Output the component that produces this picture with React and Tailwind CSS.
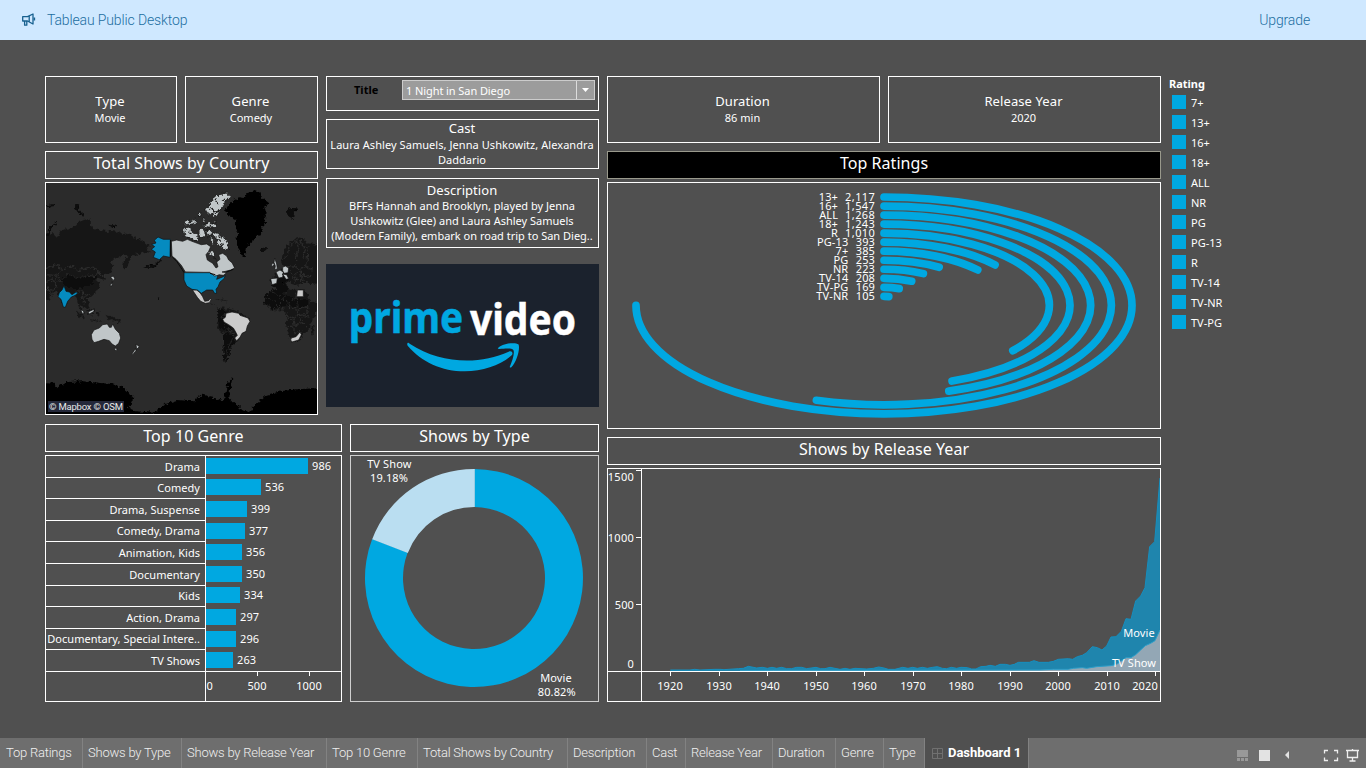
import React from "react";

const BLUE = "#00a8e1";

const genres = [
  { name: "Drama", value: 986, row: "h-[22px]", bar: "mt-[2px]" },
  { name: "Comedy", value: 536, row: "h-[21px]", bar: "mt-px" },
  { name: "Drama, Suspense", value: 399, row: "h-[22px]", bar: "mt-[2px]" },
  { name: "Comedy, Drama", value: 377, row: "h-[21px]", bar: "mt-[2px]" },
  { name: "Animation, Kids", value: 356, row: "h-[22px]", bar: "mt-[2px]" },
  { name: "Documentary", value: 350, row: "h-[22px]", bar: "mt-[2px]" },
  { name: "Kids", value: 334, row: "h-[21px]", bar: "mt-px" },
  { name: "Action, Drama", value: 297, row: "h-[22px]", bar: "mt-[2px]" },
  { name: "Documentary, Special Intere..", value: 296, row: "h-[21px]", bar: "mt-[2px]" },
  { name: "TV Shows", value: 263, row: "h-[22px]", bar: "mt-[2px]" },
];

const ratings = [
  ["13+", 2117],
  ["16+", 1547],
  ["ALL", 1268],
  ["18+", 1243],
  ["R", 1010],
  ["PG-13", 393],
  ["7+", 385],
  ["PG", 253],
  ["NR", 223],
  ["TV-14", 208],
  ["TV-PG", 169],
  ["TV-NR", 105],
];

const legend = ["7+", "13+", "16+", "18+", "ALL", "NR", "PG", "PG-13", "R", "TV-14", "TV-NR", "TV-PG"];

const tabs = [
  ["Top Ratings", "w-[83px] pl-[6px]"],
  ["Shows by Type", "w-[99px] pl-[5px]"],
  ["Shows by Release Year", "w-[145px] pl-[5px]"],
  ["Top 10 Genre", "w-[91px] pl-[5px]"],
  ["Total Shows by Country", "w-[150px] pl-[5px]"],
  ["Description", "w-[79px] pl-[5px]"],
  ["Cast", "w-[39px] pl-[5px]"],
  ["Release Year", "w-[87px] pl-[5px]"],
  ["Duration", "w-[63px] pl-[5px]"],
  ["Genre", "w-[48px] pl-[5px]"],
  ["Type", "w-[41px] pl-[5px]"],
];

function Card({ title, value, width, nudge = "" }) {
  return (
    <div className={`${width} flex h-[67px] flex-col items-center border border-white pt-[15px] pr-[2px]`}>
      <div className="text-[13px] leading-[18px] tracking-[0.1px]">{title}</div>
      <div className={`text-[11px] leading-[15px] ${nudge}`}>{value}</div>
    </div>
  );
}

function Heading({ children, className = "border-white leading-[23px]" }) {
  return (
    <div className={`flex h-[28px] justify-center border text-[16px] tracking-[0.05px] ${className}`}>{children}</div>
  );
}

function WorldMap() {
  const gray = "#c0c6c8";
  return (
    <svg className="block h-full w-full" viewBox="18 15 813 693" preserveAspectRatio="none">
      <defs>
        <filter id="coast" filterUnits="userSpaceOnUse" x="0" y="0" width="850" height="730">
          <feTurbulence type="fractalNoise" baseFrequency="0.09" numOctaves="3" seed="4" result="noise" />
          <feDisplacementMap in="SourceGraphic" in2="noise" scale="17" xChannelSelector="R" yChannelSelector="G" />
        </filter>
      </defs>
      <rect x="18" y="15" width="813" height="693" fill="#2b2b2b" />
      <g filter="url(#coast)">
        <g fill="#191919">
          <path d="M10 172 L40 168 52 180 62 160 80 152 100 146 118 132 132 122 152 130 156 152 175 156 200 158 220 160 240 166 262 168 290 180 315 192 326 205 320 212 332 226 318 222 300 226 286 224 296 234 276 232 270 246 264 262 252 272 246 256 262 236 252 228 240 238 220 240 214 252 220 262 216 276 206 286 196 290 188 292 196 304 192 312 184 304 176 300 170 306 180 316 176 330 166 344 154 356 140 360 148 374 150 388 140 396 130 386 122 380 124 398 132 410 126 408 116 386 112 368 104 352 90 348 86 362 74 386 64 372 56 352 44 340 36 350 26 368 10 360 Z" />
          <path d="M106 396 L116 402 134 420 130 424 114 410 Z M140 402 L152 392 164 396 158 408 144 410 Z M168 402 l8 -4 4 10 -8 6 Z M196 412 l20 2 22 12 4 8 -16 -4 -20 -6 Z M150 424 l30 4 -2 3 -28 -4 Z" />
          <path d="M546 388 L572 392 600 404 628 420 620 446 606 466 594 486 578 500 570 520 558 556 548 546 550 510 554 480 540 458 530 438 538 410 Z" />
          <path d="M508 374 L524 382 532 392 546 394 544 390 528 388 520 378 Z M528 362 l28 4 8 4 -30 -4 Z" />
          <path d="M726 236 L734 212 752 192 770 180 790 184 800 196 840 200 840 316 812 318 796 316 780 320 760 320 748 310 734 318 700 318 690 312 694 300 710 298 706 284 724 276 732 266 726 252 Z" />
          <path d="M676 362 L690 338 718 330 740 332 760 336 790 334 800 344 812 368 840 380 831 402 816 428 808 452 790 470 776 492 756 492 746 468 738 440 742 416 734 402 710 398 690 396 674 380 Z M812 452 l12 -12 -2 22 -8 8 Z" />
        </g>
        <g fill="#080808">
          <path d="M62 304 L86 290 118 298 142 294 172 298 162 312 148 328 128 328 110 336 84 326 68 318 Z" />
          <path d="M676 352 L700 334 736 336 740 352 768 362 802 362 808 380 780 388 744 380 700 392 674 380 Z M710 300 l20 -8 16 10 -10 10 -30 8 Z" />
          <path d="M552 470 L580 472 586 492 572 508 560 552 548 540 Z M530 396 l28 0 -4 24 18 30 -10 24 -24 -34 Z M690 318 l40 -4 20 18 -30 6 Z" />
          <path d="M106 78 l6 2 2 12 18 16 -2 8 -12 -8 -12 -16 Z M20 176 Q24 142 52 130 L50 136 Q30 148 28 176 Z M208 140 l24 4 -6 4 -18 -4 Z M20 82 l24 -4 -2 6 -22 2 Z" />
          <path d="M738 98 l14 -8 20 2 -8 10 -6 20 -12 -4 Z M660 212 l16 -6 8 6 -10 10 -14 0 Z M306 270 L346 258 360 244 362 248 348 266 310 273 Z M350 358 l10 6 -4 2 Z" />
        </g>
        <g fill="#000">
          <path d="M564 84 L580 66 600 58 614 60 622 42 644 36 658 42 660 54 684 72 676 86 680 102 674 114 678 134 666 146 668 160 656 176 634 192 618 208 614 236 604 230 596 210 590 180 592 158 584 144 586 126 574 114 560 110 552 98 Z" />
          <path d="M8 612 L40 614 54 628 78 612 130 610 176 614 214 618 244 626 268 644 280 660 266 690 288 700 340 704 374 678 410 666 460 670 486 650 516 656 546 668 556 646 562 618 578 598 570 632 568 660 584 676 610 698 628 702 650 674 680 650 720 640 770 634 842 630 842 725 8 725 Z" />
        </g>
        <g fill="none" stroke="#393939" strokeWidth="1.8" strokeLinejoin="round">
          <path d="M18 272 l28 -12 20 14 26 -10 22 14 34 -10 24 6 10 18 14 6 M64 276 l-14 18 14 14 20 -18 34 10 28 -8 20 4 14 -16 M18 290 l28 2 6 16 20 2 M18 314 l16 -8 14 8 -6 22 -24 -2 M110 344 l16 -10 6 14 -8 10 12 10 -4 8 M122 362 l18 -8 M150 352 l-18 -6 M18 332 l16 12 -4 16" />
          <path d="M728 246 l14 -14 4 -24 24 -22 8 22 -10 18 2 20 M778 186 l18 26 -6 30 M740 266 l24 -4 14 12 22 -6 18 8 M748 276 l12 14 22 -10 10 16 22 -4 M768 296 l-4 18 M782 280 l4 24 18 8 M804 206 l-4 62 M756 302 l24 4 10 10" />
          <path d="M676 360 l20 4 18 20 20 -20 2 -28 M694 340 l26 16 M720 358 l24 18 24 -16 2 -24 M744 378 l6 14 20 -4 4 -28 M774 388 l24 2 12 -20 M770 392 l6 18 -14 10 -18 -8 M776 410 l24 -4 4 -20 M742 424 l20 2 4 18 -26 2 M768 440 l20 -6 14 14 M760 448 l6 20 20 -12 M782 418 l-2 18 M784 412 l24 6 M688 382 l2 14 M704 384 l0 14 M718 386 l-2 12 M732 388 l-4 10" />
          <path d="M554 394 l2 16 -16 8 M544 420 l14 10 -8 20 M558 452 l16 6 8 18 -14 20 -12 50 M568 462 l-16 -4 -2 48 -2 36 M568 396 l4 10 M582 400 l0 10 M594 404 l-2 8" />
        </g>
        <g fill={gray} stroke="#101010" strokeWidth="2" strokeLinejoin="round">
          <path d="M430 154 l12 -6 10 8 12 10 12 12 -4 8 -14 0 -10 -8 -12 -2 Z M480 160 l8 -6 8 8 -4 14 -10 2 -6 -8 Z M498 156 l16 2 0 12 -12 4 Z M520 162 l14 4 12 8 8 4 10 24 0 16 -10 -4 -12 -10 -10 -2 -6 -8 10 -8 -8 -8 -12 -4 Z M490 140 l18 -6 20 2 -2 12 -16 2 -18 -4 Z M498 94 l12 -14 6 -14 14 -12 14 -8 20 0 6 10 -8 10 -10 10 -10 18 -6 8 -4 12 -12 2 -4 -12 -10 8 -6 -8 Z M474 106 l10 0 -2 8 -8 0 Z M434 130 l16 -6 -4 8 14 -2 6 -8 4 12 -14 4 -20 2 Z M490 120 l6 10 -8 2 Z M506 220 l12 2 8 12 -6 4 -10 -8 Z M512 176 l8 6 0 18 -8 -8 Z" />
        </g>
        <path d="M536 172 l8 10 -6 8 M540 196 l12 4 M508 88 l12 8 -6 10 M524 64 l10 14 M538 96 l-14 10 M510 140 l4 8 M448 162 l8 4 M556 60 l-10 8 M522 236 l8 12" fill="none" stroke="#1c1c1c" strokeWidth="3.4" />
      </g>
      <g stroke="#101010" strokeWidth="2" strokeLinejoin="round">
        <g fill={gray}>
          <path d="M394 190 L410 186 428 190 442 184 456 190 472 196 484 200 500 198 512 206 506 220 498 230 502 246 518 256 528 270 534 266 530 252 540 244 536 230 548 226 560 234 566 246 576 254 584 270 572 276 556 280 546 282 560 284 550 292 536 290 528 298 518 292 508 284 436 282 424 262 408 244 396 234 Z" />
          <path d="M154 470 L162 456 178 450 188 440 202 438 208 448 214 448 218 438 226 454 238 466 242 480 236 496 226 504 216 498 208 488 192 484 176 490 162 494 156 484 Z M224 510 l8 2 -4 6 -4 -2 Z M288 498 l10 8 -8 8 Z M286 512 l-10 16 2 2 10 -12 Z" />
          <path d="M208 322 l8 -6 2 -12 -6 -6 8 -4 4 8 -6 8 -2 14 Z M122 396 l8 2 2 8 -4 2 Z M144 402 l18 -8 0 6 -14 8 Z" />
          <path d="M692 302 l20 -2 -2 16 -14 4 Z M708 282 l12 -6 10 6 -2 16 -12 2 Z M728 268 l8 -4 10 6 -2 14 -12 2 -4 -8 Z M726 288 l14 2 6 12 -8 2 -6 -10 Z M704 240 l6 18 2 14 -8 4 2 -12 -4 -10 Z M696 256 l6 0 0 6 -8 4 Z" />
        </g>
        <g fill="#cbcbcb">
          <path d="M458 336 l12 0 10 8 8 12 6 14 12 -2 4 -6 4 2 -6 10 -12 2 -14 -6 -10 -12 -12 -18 Z" />
          <path d="M548 424 L556 418 558 406 576 402 596 406 600 412 624 420 630 430 622 444 618 460 606 466 600 478 590 488 584 480 592 472 586 460 580 450 566 440 552 432 Z" />
          <path d="M772 336 l18 0 0 20 -20 0 Z M754 480 l14 -4 12 -14 4 8 -8 16 -20 6 -4 -6 Z" />
        </g>
        <g fill="#058bc0">
          <path d="M391 184 L370 184 354 177 343 187 348 195 335 199 344 206 334 214 346 222 340 238 358 245 370 234 390 238 Z" />
          <path d="M432 284 L510 284 524 294 534 292 530 304 550 296 556 292 552 302 540 312 534 326 528 334 530 346 524 346 518 336 500 336 484 346 472 336 456 334 440 324 432 306 Z" />
          <path d="M72 323 L78 340 88 342 96 350 108 342 114 344 106 352 94 357 83 370 76 388 70 387 63 364 54 356 58 344 66 336 Z" />
        </g>
      </g>
      <path d="M392 186 L392 236 M398 238 L410 250 426 274 432 284" fill="none" stroke="#0a0a0a" strokeWidth="3" />
      <path d="M560 282 l20 -8 M510 286 l16 4" fill="none" stroke="#0a0a0a" strokeWidth="3" />
      <path d="M434 283 L510 283" stroke="#2f3a3f" strokeWidth="3" />
    </svg>
  );
}

function PrimeLogo() {
  return (
    <svg className="block h-[143px] w-[273px] bg-[#1b222d]" viewBox="326 264 273 143">
      <g fontFamily="'Noto Sans', sans-serif" fontWeight="700" fontSize="42.5" strokeWidth="0.5">
        <text x="348.8" y="333.4" fill={BLUE} stroke={BLUE} textLength="114.5" lengthAdjust="spacingAndGlyphs">prime</text>
        <text x="470" y="334.8" fill="#fff" stroke="#fff" textLength="106" lengthAdjust="spacingAndGlyphs">video</text>
      </g>
      <g transform="translate(320 258) scale(.33333)" fill={BLUE}>
        <path d="M263 255 C261 256 261 260 263 263 C305 312 366 340 434 340 C490 339 542 321 575 292 C581 285 575 277 566 281 C478 321 362 318 269 257 C267 255 265 254 263 255 Z" />
        <path d="M534 271 C543 257 586 251 595 259 C602 269 590 313 574 328 C571 330 568 328 570 325 C577 308 585 284 580 276 C575 269 553 272 538 273 C534 273 533 272 534 271 Z" />
      </g>
    </svg>
  );
}

function GenreChart() {
  return (
    <div className="mt-[3px] h-[247px] border border-white text-[11px]">
      {genres.map((g) => (
        <div key={g.name} className={`flex ${g.row}`}>
          <div className="flex w-[160px] items-center justify-end whitespace-nowrap border-r border-b border-white pr-[5px] leading-[20px] tracking-[0.03px]">
            <span>{g.name}</span>
          </div>
          <div className={`flex h-[16px] items-center ${g.bar}`}>
            <div className="h-[16px] bg-[#00a8e1]" style={{ width: Math.floor(g.value * 0.1036) }} />
            <span className="pl-[4px] leading-[16px] tracking-[0.1px]">{g.value}</span>
          </div>
        </div>
      ))}
      <div className="flex h-[29px]">
        <div className="w-[160px] border-r border-white" />
        <svg className="-mt-px block h-[30px] w-[135px]" viewBox="206 671 135 30" fill="#fff" fontSize="11" letterSpacing="0.1" textAnchor="middle">
          <path d="M206 671.5 H341 M257.5 672 V676 M309.5 672 V676" stroke="#fff" />
          <text x="206.5" y="690" textAnchor="start">0</text>
          <text x="257" y="690">500</text>
          <text x="309" y="690">1000</text>
        </svg>
      </div>
    </div>
  );
}

function Donut() {
  return (
    <div className="mt-[3px] h-[247px] border border-[#cfcfcf]">
      <svg className="block h-[245px] w-[247px]" viewBox="351 456 247 245" fill="#fff" fontSize="11" letterSpacing="0.12" textAnchor="middle">
        <path fill={BLUE} d="M474.3 469 A109 109 0 1 1 372.2 539 L407.7 552.6 A71 71 0 1 0 474.3 507 Z" />
        <path fill="#badef1" d="M474.8 469 A109 109 0 0 0 372.2 539.3 L407.8 553 A71 71 0 0 1 474.8 507 Z" />
        <text x="389.3" y="468">TV Show</text>
        <text x="389" y="482">19.18%</text>
        <text x="556" y="682">Movie</text>
        <text x="556.8" y="696">80.82%</text>
      </svg>
    </div>
  );
}

function RatingArcs() {
  const cx = 884;
  const cy = 305.4;
  return (
    <div className="mt-[3px] h-[247px] border border-white">
      <svg className="block h-[245px] w-[552px]" viewBox="608 183 552 245" fontSize="11" letterSpacing="0.1" textAnchor="end">
        {ratings.map(([name, value], i) => {
          const k = (12 - i) / 12;
          const rx = 248 * k;
          const ry = 108.4 * k;
          const a = (value / 2117) * 1.5 * Math.PI;
          const d = `M${cx} ${cy - ry} A${rx} ${ry} 0 ${a > Math.PI ? 1 : 0} 1 ${cx + rx * Math.sin(a)} ${cy - ry * Math.cos(a)}`;
          const y = 201 + i * 9.04;
          return (
            <g key={name}>
              <path d={d} fill="none" stroke={BLUE} strokeWidth="7.7" strokeLinecap="round" />
              <text x={value > 999 ? 838 : 848.3} y={y} fill="#fff">{name}</text>
              <text
                x="875"
                y={y}
                fill="#fff"
                textLength={value > 999 ? 30 : undefined}
              >
                {value.toLocaleString("en-US")}
              </text>
            </g>
          );
        })}
      </svg>
    </div>
  );
}

const movieLine =
  "211,720 270,720 284,718 300,720 345,718 360,718 372,719 415,716 430,715 445,709 470,714 487,712 502,715 516,712 530,715 545,712 560,716 575,716 590,712 605,712 620,716 648,712 662,716 675,716 690,712 705,715 720,718 735,715 750,718 765,715 800,717 820,715 836,711 852,714 865,718 885,718 908,712 924,715 938,712 952,715 967,712 982,715 998,712 1012,710 1027,715 1040,716 1054,712 1070,715 1083,712 1102,713 1115,717 1128,717 1142,710 1158,709 1170,706 1186,709 1200,703 1216,703 1230,706 1243,703 1255,697 1288,697 1302,692 1317,697 1345,697 1360,694 1375,688 1405,686 1418,688 1432,680 1447,676 1460,668 1477,650 1492,653 1506,660 1520,648 1533,621 1548,620 1564,604 1578,566 1593,568 1607,513 1622,498 1635,473 1649,350 1664,335 1680,144";
const tvLine =
  "420,722 520,721 800,721 1320,720 1360,718 1405,718 1420,715 1447,713 1460,715 1490,710 1533,707 1550,703 1578,683 1593,683 1607,674 1622,660 1636,647 1652,640 1665,632 1680,600";

function YearChart() {
  const ticks = [670.5, 719.5, 767.5, 816.5, 864.5, 913.5, 961.5, 1010.5, 1058.5, 1107.5, 1155.5];
  return (
    <div className="mt-[3px] h-[234px] border border-white">
      <svg className="block h-[232px] w-[552px]" viewBox="608 469 552 232" fill="#fff" fontSize="11" letterSpacing="0.1" textAnchor="middle">
        <g transform="translate(600 430) scale(.33333)">
          <polygon points={`${movieLine} 1680,723 211,723`} fill="#1f85ad" />
          <polygon points={`${tvLine} 1680,723 420,723`} fill="#93a7b5" />
          <polyline points={movieLine} fill="none" stroke="#158fbf" strokeWidth="3" />
          <polyline points={tvLine} fill="none" stroke="#2b9fca" strokeWidth="3" />
        </g>
        <path d="M641.5 469 V701 M608 671.5 H1160 M636 470.5 H641 M636 537.5 H641 M636 604.5 H641" stroke="#fff" />
        <g textAnchor="end">
          <text x="634" y="481" textLength="26.3">1500</text>
          <text x="634" y="542" textLength="26.3">1000</text>
          <text x="634" y="609">500</text>
          <text x="634" y="668">0</text>
        </g>
        {ticks.map((x, i) => (
          <g key={x}>
            <path d={`M${x} 672 V676`} stroke="#fff" />
            <text x={i === 10 ? 1145 : x - 0.5} y="690">{1920 + i * 10}</text>
          </g>
        ))}
        <text x="1139" y="637">Movie</text>
        <text x="1134" y="667">TV Show</text>
      </svg>
    </div>
  );
}

function MegaphoneIcon() {
  return (
    <svg className="h-[14px] w-[14px]" viewBox="0 0 14 14" fill="none" stroke="#17608f" strokeWidth="1.3" strokeLinejoin="round">
      <path d="M.7 3.7 H5.5 L11 1 V11 L5.5 8 H.7 Z M2.6 8.2 V12.2 H4.8 V8.2 M7.2 3 V8.6 M12.5 4.6 V7.4" />
    </svg>
  );
}

function StatusIcons() {
  return (
    <svg className="h-[30px] w-[136px]" viewBox="1230 738 136 30" fill="none">
      <path d="M1237 750 h11 v7 h-11 Z M1237 758 h3 v3 h-3 Z M1241 758 h3 v3 h-3 Z M1245 758 h3 v3 h-3 Z" fill="#999" />
      <rect x="1259" y="750" width="11" height="11" fill="#e3e3e3" />
      <path d="M1289 751 V759 L1285 755 Z" fill="#e3e3e3" />
      <path d="M1328 750.5 H1324.5 V753.5 M1334 750.5 H1337.5 V753.5 M1324.5 757.5 V760.5 H1328 M1337.5 757.5 V760.5 H1334" stroke="#eee" strokeWidth="1.3" />
      <path d="M1346 750.5 H1359 M1347.5 750 V757.5 H1357.5 V750 M1352.5 749 V750 M1352.5 758 V761 M1349.5 761 H1355.5" stroke="#eee" strokeWidth="1.3" />
    </svg>
  );
}

export default function App() {
  return (
    <div className="flex h-[768px] w-[1366px] flex-col overflow-hidden bg-[#505050] font-['Noto_Sans',sans-serif] text-white">
      <header className="flex h-[40px] items-center bg-[#cfe8ff] pr-[56px] pl-[22px] font-['Roboto',sans-serif] text-[14px] font-light tracking-[-0.13px] text-[#1c6e9f]">
        <MegaphoneIcon />
        <span className="ml-[11px]">Tableau Public Desktop</span>
        <span className="ml-auto">Upgrade</span>
      </header>

      <main className="flex h-[698px] gap-[8px] pt-[36px] pl-[45px]">
        <section className="w-[554px]">
          <div className="flex h-[348px] gap-[8px]">
            <div className="w-[273px]">
              <div className="flex gap-[8px]">
                <Card title="Type" value="Movie" width="w-[132px]" />
                <Card title="Genre" value="Comedy" width="w-[133px]" nudge="pl-px" />
              </div>
              <div className="mt-[8px]"><Heading>Total Shows by Country</Heading></div>
              <div className="relative mt-[3px] h-[233px] border border-white">
                <WorldMap />
                <span className="absolute bottom-[2px] left-[2px] flex h-[11px] w-[76px] items-center bg-[#24283a] pt-px pl-px font-['Roboto',sans-serif] text-[9.5px] tracking-[-0.2px] whitespace-nowrap text-[#e8e8e8]">
                  © Mapbox © OSM
                </span>
              </div>
            </div>

            <div className="w-[273px]">
              <div className="flex h-[35px] border border-white pt-[3px]">
                <b className="w-[75px] pl-[27px] text-[11px] leading-[20px] text-black">Title</b>
                <div className="flex h-[20px] w-[193px] border border-[#ccc] bg-[#9c9c9c] text-[11px] leading-[20px]">
                  <span className="w-[173px] pl-[3px] tracking-[-0.08px]">1 Night in San Diego</span>
                  <span className="flex flex-1 items-center justify-center border-l border-[#ddd]">
                    <svg className="h-[4px] w-[7px]" viewBox="0 0 7 4"><path d="M0 0 H7 L3.5 4 Z" fill="#fff" /></svg>
                  </span>
                </div>
              </div>
              <div className="mt-[8px] flex h-[50px] flex-col items-center border border-white pr-px text-[11px] leading-[15px] whitespace-nowrap">
                <div className="text-[13px] leading-[17px]">Cast</div>
                <div className="tracking-[0.06px]">Laura Ashley Samuels, Jenna Ushkowitz, Alexandra</div>
                <div>Daddario</div>
              </div>
              <div className="mt-[9px] flex h-[70px] flex-col items-center border border-white pt-[3px] pr-px text-[11px] leading-[15px] whitespace-nowrap">
                <div className="text-[13px] leading-[16px] tracking-[0.05px]">Description</div>
                <div>BFFs Hannah and Brooklyn, played by Jenna</div>
                <div>Ushkowitz (Glee) and Laura Ashley Samuels</div>
                <div>(Modern Family), embark on road trip to San Dieg..</div>
              </div>
              <div className="mt-[16px]"><PrimeLogo /></div>
            </div>
          </div>

          <div className="flex gap-[8px]">
            <div className="w-[297px]">
              <Heading>Top 10 Genre</Heading>
              <GenreChart />
            </div>
            <div className="w-[249px]">
              <Heading>Shows by Type</Heading>
              <Donut />
            </div>
          </div>
        </section>

        <section className="w-[554px]">
          <div className="flex gap-[8px]">
            <Card title="Duration" value="86 min" width="w-[273px]" />
            <Card title="Release Year" value="2020" width="w-[273px]" />
          </div>
          <div className="mt-[8px]"><Heading className="border-[#99998c] bg-black leading-[23px]">Top Ratings</Heading></div>
          <RatingArcs />
          <div className="mt-[8px]"><Heading>Shows by Release Year</Heading></div>
          <YearChart />
        </section>

        <aside className="w-[120px] text-[11px]">
          <div className="h-[16px] leading-[16px] font-bold">Rating</div>
          {legend.map((name) => (
            <div key={name} className="flex h-[20px] items-center pl-[3px]">
              <span className="h-[14px] w-[14px] bg-[#00a8e1]" />
              <span className="pt-[2px] pl-[5px] leading-[18px]">{name}</span>
            </div>
          ))}
        </aside>
      </main>

      <footer className="flex h-[30px] bg-[#6e6e6e] font-['Roboto',sans-serif] text-[13px] font-light tracking-[-0.22px] text-[#f0f0f0]">
        {tabs.map(([name, width]) => (
          <div key={name} className={`${width} shrink-0 border-r border-[#828282] leading-[30px] whitespace-nowrap`}>
            {name}
          </div>
        ))}
        <div className="flex w-[104px] items-center border-r border-[#828282] bg-[#505050] pl-[7px] font-bold tracking-[-0.05px] whitespace-nowrap text-white">
          <svg className="mr-[5px] h-[11px] w-[11px]" viewBox="0 0 11 11" fill="none" stroke="#707070">
            <path d="M.5 .5 H10.5 V10.5 H.5 Z M5.5 0 V11 M0 5.5 H11" />
          </svg>
          Dashboard 1
        </div>
        <div className="ml-auto"><StatusIcons /></div>
      </footer>
    </div>
  );
}
